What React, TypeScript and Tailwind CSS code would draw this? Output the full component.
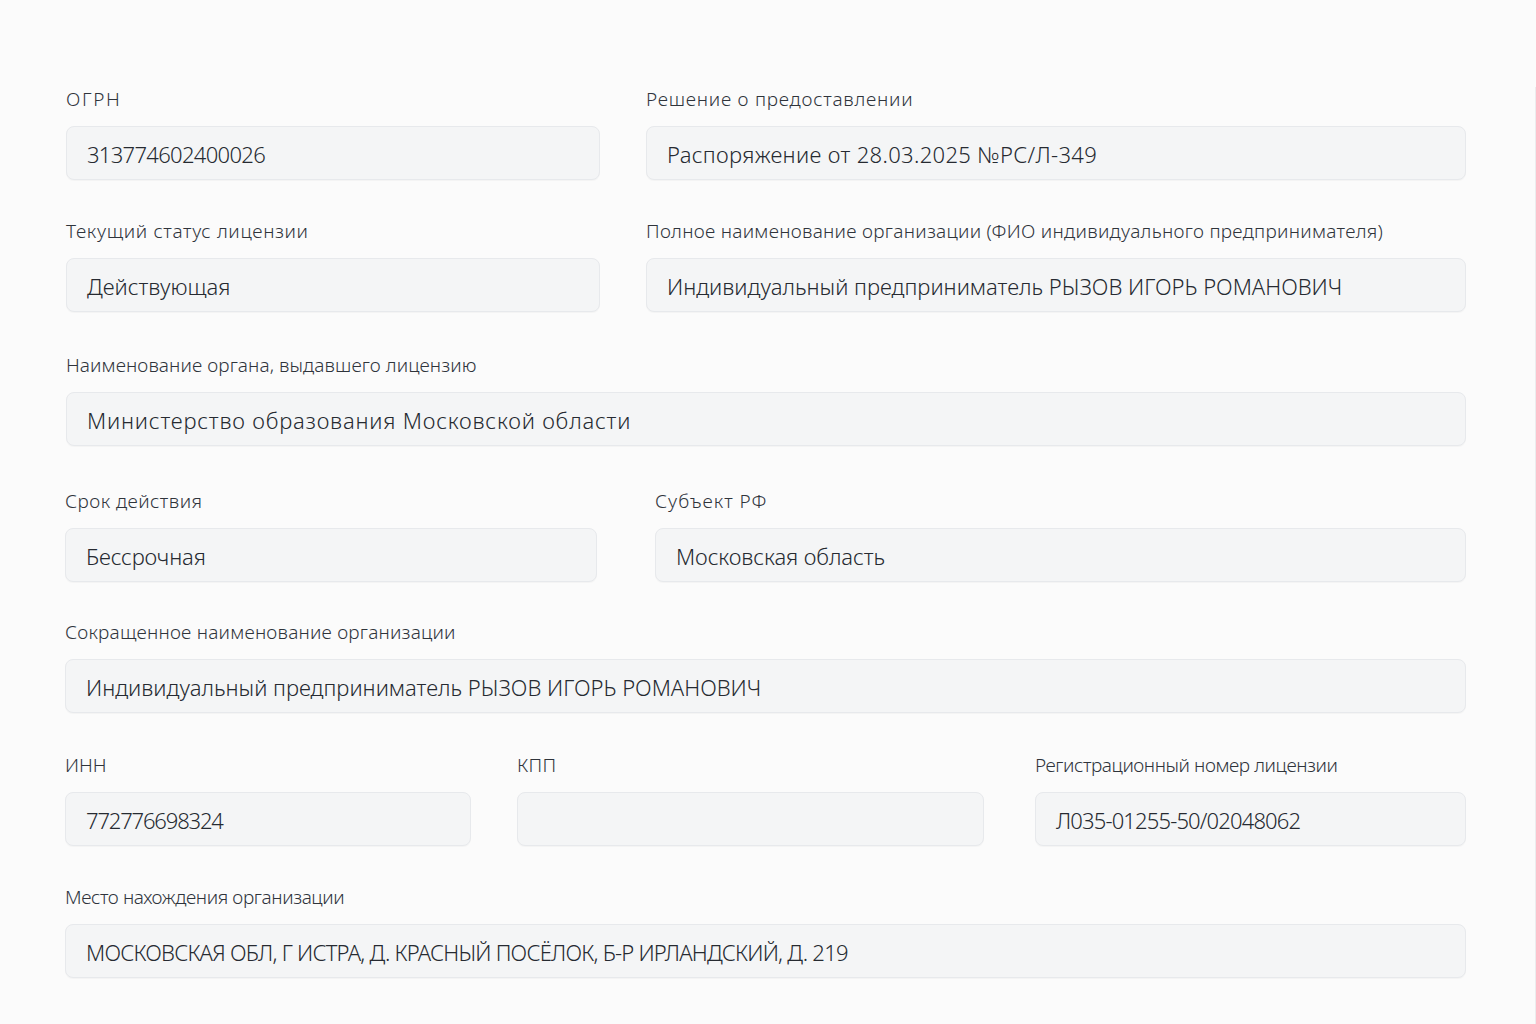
import React from 'react';

interface Field {
  label: string;
  value: string;
  lt?: string; // label tracking
  vt?: string; // value tracking
  extra?: string;
}

interface Row {
  cols: string;
  gap: string;
  top: string;
  fields: Field[];
}

const rows: Row[] = [
  {
    cols: 'grid-cols-[534px_1fr]',
    gap: 'gap-x-[46px]',
    top: 'mt-[87px]',
    fields: [
      { label: 'ОГРН', value: '313774602400026', lt: 'tracking-[1.6px]', vt: 'tracking-[-0.69px]' },
      { label: 'Решение о предоставлении', value: 'Распоряжение от 28.03.2025 №РС/Л-349', lt: 'tracking-[0.75px]', vt: 'tracking-[0.33px]' }
    ]
  },
  {
    cols: 'grid-cols-[534px_1fr]',
    gap: 'gap-x-[46px]',
    top: 'mt-[39px]',
    fields: [
      { label: 'Текущий статус лицензии', value: 'Действующая', lt: 'tracking-[0.65px]' },
      {
        label: 'Полное наименование организации (ФИО индивидуального предпринимателя)',
        value: 'Индивидуальный предприниматель РЫЗОВ ИГОРЬ РОМАНОВИЧ',
        lt: 'tracking-[0.29px]'
      }
    ]
  },
  {
    cols: 'grid-cols-1',
    gap: 'gap-x-0',
    top: 'mt-[41px]',
    fields: [
      { label: 'Наименование органа, выдавшего лицензию', value: 'Министерство образования Московской области', lt: 'tracking-[0.09px]', vt: 'tracking-[0.8px]' }
    ]
  },
  {
    cols: 'grid-cols-[532px_1fr]',
    gap: 'gap-x-[57px]',
    top: 'mt-[43px] ml-[-1px]',
    fields: [
      { label: 'Срок действия', value: 'Бессрочная', lt: 'tracking-[0.46px]', vt: 'tracking-[-0.15px]' },
      { label: 'Субъект РФ', value: 'Московская область', lt: 'tracking-[1px]', vt: 'tracking-[-0.08px]', extra: 'ml-[1px]' }
    ]
  },
  {
    cols: 'grid-cols-1',
    gap: 'gap-x-0',
    top: 'mt-[38px] ml-[-1px]',
    fields: [
      { label: 'Сокращенное наименование организации', value: 'Индивидуальный предприниматель РЫЗОВ ИГОРЬ РОМАНОВИЧ', lt: 'tracking-[0.22px]' }
    ]
  },
  {
    cols: 'grid-cols-[406px_467px_1fr]',
    gap: 'gap-x-[46px]',
    top: 'mt-[40px] ml-[-1px]',
    fields: [
      { label: 'ИНН', value: '772776698324', vt: 'tracking-[-1.17px]' },
      { label: 'КПП', value: '', lt: 'tracking-[0.3px]' },
      { label: 'Регистрационный номер лицензии', value: 'Л035-01255-50/02048062', lt: 'tracking-[-0.42px]', vt: 'tracking-[-0.86px]', extra: 'ml-[5px]' }
    ]
  },
  {
    cols: 'grid-cols-1',
    gap: 'gap-x-0',
    top: 'mt-[39px] ml-[-1px]',
    fields: [
      {
        label: 'Место нахождения организации',
        value: 'МОСКОВСКАЯ ОБЛ, Г ИСТРА, Д. КРАСНЫЙ ПОСЁЛОК, Б-Р ИРЛАНДСКИЙ, Д. 219',
        lt: 'tracking-[-0.38px]',
        vt: 'tracking-[-0.76px]'
      }
    ]
  }
];

const FieldBox: React.FC<{ field: Field }> = ({ field }) => (
  <div className={`flex flex-col ${field.extra || ''}`}>
    <label className={`text-[19px] leading-[24px] font-light text-[#2f343b] whitespace-nowrap ${field.lt || ''}`}>{field.label}</label>
    <div
      className={`mt-[15px] h-[54px] flex items-center px-[20px] pt-[2px] rounded-[8px] border border-[#e7e9ec] bg-[#f4f5f6] shadow-[0_1px_1px_rgba(0,0,0,0.03)] text-[22px] font-light text-[#262a31] whitespace-nowrap ${field.vt || ''}`}
    >
      {field.value}
    </div>
  </div>
);

const App: React.FC = () => {
  return (
    <div className="w-[1536px] h-[1024px] overflow-hidden bg-[#fbfbfb] font-['Noto_Sans',sans-serif]">
      <div className="h-[1022px] border-r border-b border-[#ececee] pl-[66px] pr-[69px]">
        {rows.map((row, i) => (
          <div key={i} className={`grid ${row.cols} ${row.gap} ${row.top}`}>
            {row.fields.map(f => (
              <FieldBox key={f.label} field={f} />
            ))}
          </div>
        ))}
      </div>
    </div>
  );
};

export default App;
